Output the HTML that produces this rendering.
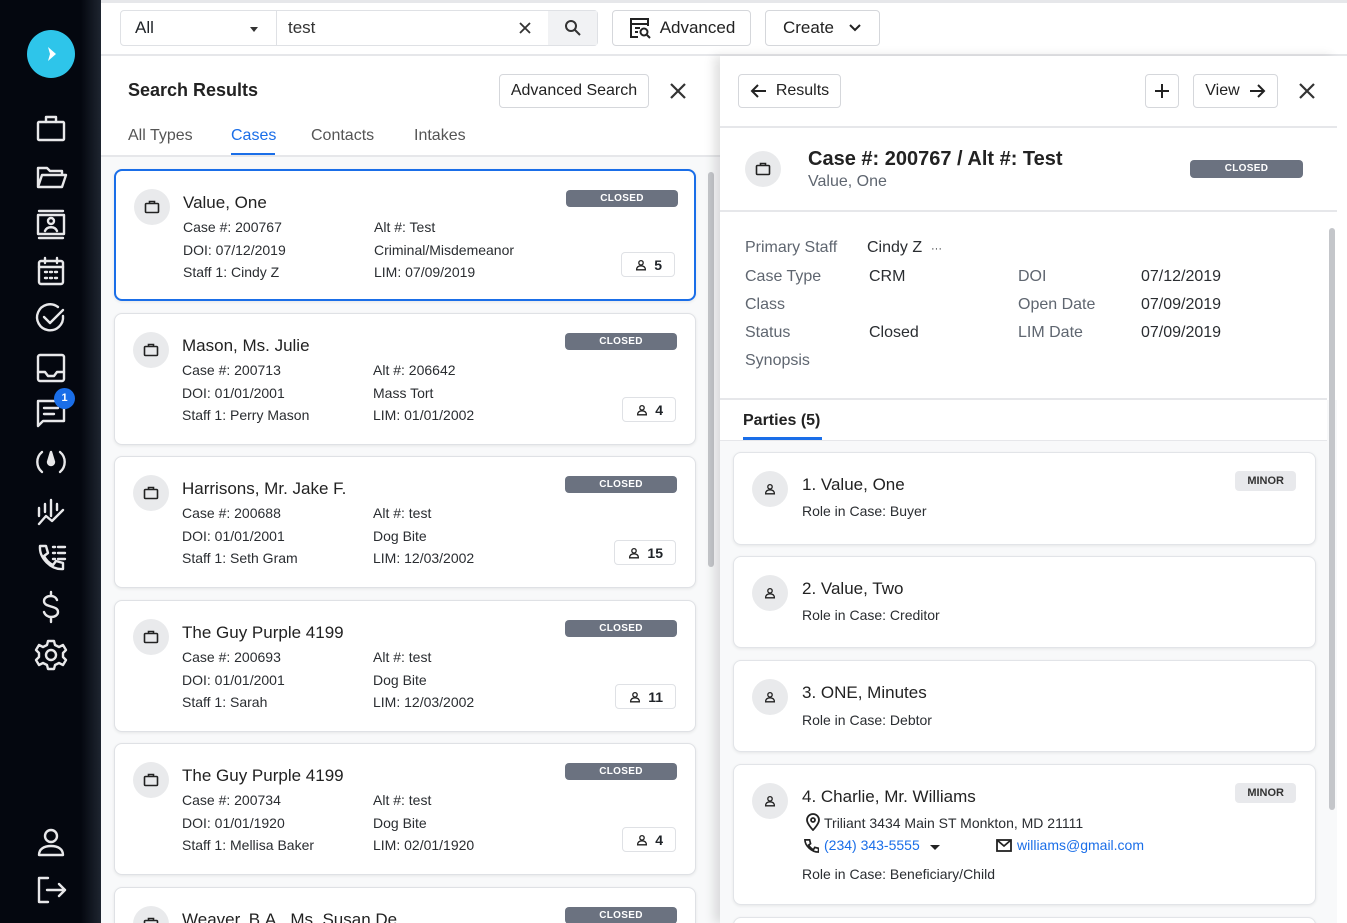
<!DOCTYPE html>
<html><head><meta charset="utf-8"><style>
*{box-sizing:border-box;margin:0;padding:0}
html,body{width:1347px;height:923px;overflow:hidden}
body{font-family:"Liberation Sans",sans-serif;color:#1f2328;background:#fff;position:relative}
.abs{position:absolute}
#side{left:0;top:0;width:101px;height:923px;background:linear-gradient(90deg,#04070f 0,#04070f 80%,#1e2530 100%)}
#side svg{position:absolute;left:33px;width:36px;height:36px;stroke:#e8e8ea;fill:none;stroke-width:2.4;stroke-linecap:round;stroke-linejoin:round}
.btn{position:absolute;border:1px solid #d5d7db;border-radius:4px;background:#fff;font-size:17px;color:#222;display:flex;align-items:center;justify-content:center;gap:8px}
.card{position:absolute;left:114px;width:582px;height:132px;border:1px solid #dfe1e5;border-radius:8px;background:#fff;box-shadow:0 1px 3px rgba(0,0,0,.08)}
.ic{position:absolute;left:18px;top:18px;width:36px;height:36px;border-radius:50%;background:#e9eaec;display:flex;align-items:center;justify-content:center}
.card .nm{position:absolute;left:67px;top:22px;font-size:17px;color:#222}
.card .l{position:absolute;left:67px;top:45px;font-size:14px;line-height:22.5px;color:#2a2d31}
.card .r{position:absolute;left:258px;top:45px;font-size:14px;line-height:22.5px;color:#2a2d31}
.badge{position:absolute;background:#6b7280;color:#fff;font-size:10px;font-weight:bold;border-radius:4px;text-align:center;letter-spacing:.3px}
.card .badge{left:450px;top:19px;width:112px;height:17px;line-height:17px}
.cnt{position:absolute;right:19px;bottom:22px;height:25px;border:1px solid #dfe1e5;border-radius:4px;font-size:14px;font-weight:bold;display:flex;align-items:center;gap:6px;padding:0 12px}
.pc{position:absolute;left:733px;width:583px;border:1px solid #e2e4e8;border-radius:8px;background:#fff;box-shadow:0 1px 3px rgba(0,0,0,.08)}
.pc .ic{left:18px;top:18px}
.pc .nm{position:absolute;left:68px;top:22px;font-size:17px;color:#222}
.pc .rl{position:absolute;left:68px;font-size:14px;color:#2a2d31}
.minor{position:absolute;right:19px;top:18px;background:#e8e9ec;border-radius:4px;font-size:11px;font-weight:bold;color:#333;padding:4px 12px}
.lab{position:absolute;font-size:16px;color:#5f6670}
.val{position:absolute;font-size:16px;color:#2a2d31}
</style></head><body>
<svg width="0" height="0" style="position:absolute"><defs>
<symbol id="bc" viewBox="0 0 18 18"><g fill="none" stroke="#222" stroke-width="1.6"><rect x="2.5" y="5.5" width="13" height="9" rx="1"/><path d="M6.5 5.5V3.5h5v2"/></g></symbol>
<symbol id="pp" viewBox="0 0 16 16"><g fill="none" stroke="#222" stroke-width="1.5"><circle cx="8" cy="5.5" r="2.5"/><path d="M3 13.5c0-3 2-4.5 5-4.5s5 1.5 5 4.5z"/></g></symbol>
</defs></svg>
<div class="abs" style="left:0;top:0;width:1347px;height:3px;background:#e6e7ea"></div>
<div id="side" class="abs">
 <div class="abs" style="left:27px;top:30px;width:48px;height:48px;border-radius:50%;background:#2ec5ea"></div>
 <svg viewBox="0 0 36 36" style="top:36px;left:33px;stroke:none;fill:#fff"><path d="M15 11 L23 18 L15 25 L17 18 Z"/></svg>
 <svg viewBox="0 0 36 36" style="top:111px"><rect x="5" y="11" width="26" height="18" rx="1"/><path d="M13 11V6h10v5"/></svg>
 <svg viewBox="0 0 36 36" style="top:159px"><path d="M5 28V9h9l3 3h12v4M5 28l4-12h24l-4 12z"/></svg>
 <svg viewBox="0 0 36 36" style="top:206px"><path d="M6 5h24M6 32h24"/><rect x="5" y="9" width="26" height="19"/><circle cx="18" cy="15" r="3"/><path d="M12 25c2-5 10-5 12 0"/></svg>
 <svg viewBox="0 0 36 36" style="top:253px"><rect x="6" y="8" width="24" height="23" rx="2"/><path d="M6 14h24M12 5v5M24 5v5M12 19h2M17 19h2M22 19h2M12 25h2M17 25h2M22 25h2"/></svg>
 <svg viewBox="0 0 36 36" style="top:300px"><path d="M30 16a13 13 0 1 1-5-9"/><path d="M11 17l6 6 13-13"/></svg>
 <svg viewBox="0 0 36 36" style="top:350px"><rect x="5" y="5" width="26" height="26" rx="2"/><path d="M5 22h7l3 4h6l3-4h7"/></svg>
 <svg viewBox="0 0 36 36" style="top:395px"><path d="M5 6h26v20H10l-5 5z"/><path d="M11 13h14M11 19h10"/></svg>
 <div class="abs" style="left:54px;top:388px;width:21px;height:21px;border-radius:50%;background:#1a6ee8;color:#fff;font-size:11px;font-weight:bold;text-align:center;line-height:21px">1</div>
 <svg viewBox="0 0 36 36" style="top:444px"><path d="M9 8a13 13 0 0 0 0 20M27 8a13 13 0 0 1 0 20"/><path d="M18 8l-3 10a3 3 0 0 0 6 0z" fill="#e8e8ea"/></svg>
 <svg viewBox="0 0 36 36" style="top:494px"><path d="M6 30l7-8 6 5 11-11M6 22V14M12 18V10M18 22V6M24 16V10"/></svg>
 <svg viewBox="0 0 36 36" style="top:540px"><path d="M7 6h6l2 7-4 3c2 4 5 7 9 9l3-4 7 2v6c-12 1-24-11-23-23z"/><path d="M20 7h2M25 7h7M20 13h2M25 13h7M20 19h2M25 19h7"/></svg>
 <svg viewBox="0 0 36 36" style="top:589px"><path d="M24 11c-1-3-4-4-6-4-4 0-7 2-7 5 0 7 14 4 14 11 0 3-3 5-7 5-3 0-6-2-7-5M18 3v4M18 28v5"/></svg>
 <svg viewBox="0 0 36 36" style="top:637px"><circle cx="18" cy="18" r="5"/><path d="M15 4h6l1 4 4 2 4-2 3 5-3 3v4l3 3-3 5-4-2-4 2-1 4h-6l-1-4-4-2-4 2-3-5 3-3v-4l-3-3 3-5 4 2 4-2z"/></svg>
 <svg viewBox="0 0 36 36" style="top:824px"><circle cx="18" cy="12" r="6"/><path d="M6 31c0-6 5-9 12-9s12 3 12 9z"/></svg>
 <svg viewBox="0 0 36 36" style="top:872px"><path d="M15 6H6v24h9M14 18h18M26 12l6 6-6 6"/></svg>
</div>
<!-- top bar -->
<div class="abs" style="left:101px;top:54px;width:1246px;height:2px;background:#e6e7ea"></div>
<div class="abs" style="left:120px;top:10px;width:478px;height:36px;border:1px solid #dfe1e5;border-radius:4px"></div>
<div class="abs" style="left:135px;top:18px;font-size:17px">All</div>
<div class="abs" style="left:250px;top:27px;border:4px solid transparent;border-top:5px solid #333"></div>
<div class="abs" style="left:276px;top:11px;width:1px;height:34px;background:#dfe1e5"></div>
<div class="abs" style="left:288px;top:18px;font-size:17px;color:#333">test</div>
<svg class="abs" style="left:519px;top:22px" width="12" height="12" viewBox="0 0 12 12" stroke="#333" stroke-width="1.8"><path d="M1 1l10 10M11 1L1 11"/></svg>
<div class="abs" style="left:548px;top:11px;width:49px;height:34px;background:#f1f2f4"></div>
<svg class="abs" style="left:563px;top:18px" width="20" height="20" viewBox="0 0 20 20" fill="none" stroke="#333" stroke-width="2"><circle cx="8" cy="8" r="5"/><path d="M12 12l5 5"/></svg>
<div class="btn" style="left:612px;top:10px;width:139px;height:36px"><svg width="24" height="24" viewBox="0 0 24 24" fill="none" stroke="#222" stroke-width="2"><path d="M10 21H3V3h17v7M3 8h17M7 12h5M7 16h3"/><circle cx="16" cy="16" r="3.5"/><path d="M19 19l3 3"/></svg>Advanced</div>
<div class="btn" style="left:765px;top:10px;width:115px;height:36px;gap:14px">Create<svg width="14" height="10" viewBox="0 0 14 10" fill="none" stroke="#222" stroke-width="2"><path d="M2 2l5 5 5-5"/></svg></div>
<!-- left panel -->
<div class="abs" style="left:101px;top:56px;width:619px;height:867px;background:#f8f9fa"></div>
<div class="abs" style="left:101px;top:56px;width:619px;height:100px;background:#fff"></div>
<div class="abs" style="left:128px;top:80px;font-size:18px;font-weight:bold;color:#222">Search Results</div>
<div class="btn" style="left:499px;top:74px;width:150px;height:34px;font-size:16px">Advanced Search</div>
<svg class="abs" style="left:669px;top:82px" width="18" height="18" viewBox="0 0 18 18" stroke="#333" stroke-width="2.2"><path d="M2 2l14 14M16 2L2 16"/></svg>
<div class="abs" style="left:128px;top:127px;font-size:16px;color:#555">All Types</div>
<div class="abs" style="left:231px;top:127px;font-size:16px;color:#1a6ee8">Cases</div>
<div class="abs" style="left:231px;top:153px;width:44px;height:3px;background:#1a6ee8"></div>
<div class="abs" style="left:311px;top:127px;font-size:16px;color:#555">Contacts</div>
<div class="abs" style="left:414px;top:127px;font-size:16px;color:#555">Intakes</div>
<div class="abs" style="left:101px;top:155px;width:619px;height:2px;background:#e6e7ea"></div>
<div class="abs" style="left:708px;top:172px;width:6px;height:395px;border-radius:3px;background:#c4c6ca"></div>

<div class="card" style="top:169px;border:2px solid #1a6ee8"><div class="ic"><svg width="18" height="18"><use href="#bc"/></svg></div><div class="nm">Value, One</div><div class="l">Case #: 200767<br>DOI: 07/12/2019<br>Staff 1: Cindy Z</div><div class="r">Alt #: Test<br>Criminal/Misdemeanor<br>LIM: 07/09/2019</div><div class="badge">CLOSED</div><div class="cnt"><svg width="14" height="14"><use href="#pp"/></svg>5</div></div>
<div class="card" style="top:313px"><div class="ic"><svg width="18" height="18"><use href="#bc"/></svg></div><div class="nm">Mason, Ms. Julie</div><div class="l">Case #: 200713<br>DOI: 01/01/2001<br>Staff 1: Perry Mason</div><div class="r">Alt #: 206642<br>Mass Tort<br>LIM: 01/01/2002</div><div class="badge">CLOSED</div><div class="cnt"><svg width="14" height="14"><use href="#pp"/></svg>4</div></div>
<div class="card" style="top:456px"><div class="ic"><svg width="18" height="18"><use href="#bc"/></svg></div><div class="nm">Harrisons, Mr. Jake F.</div><div class="l">Case #: 200688<br>DOI: 01/01/2001<br>Staff 1: Seth Gram</div><div class="r">Alt #: test<br>Dog Bite<br>LIM: 12/03/2002</div><div class="badge">CLOSED</div><div class="cnt"><svg width="14" height="14"><use href="#pp"/></svg>15</div></div>
<div class="card" style="top:600px"><div class="ic"><svg width="18" height="18"><use href="#bc"/></svg></div><div class="nm">The Guy Purple 4199</div><div class="l">Case #: 200693<br>DOI: 01/01/2001<br>Staff 1: Sarah</div><div class="r">Alt #: test<br>Dog Bite<br>LIM: 12/03/2002</div><div class="badge">CLOSED</div><div class="cnt"><svg width="14" height="14"><use href="#pp"/></svg>11</div></div>
<div class="card" style="top:743px"><div class="ic"><svg width="18" height="18"><use href="#bc"/></svg></div><div class="nm">The Guy Purple 4199</div><div class="l">Case #: 200734<br>DOI: 01/01/1920<br>Staff 1: Mellisa Baker</div><div class="r">Alt #: test<br>Dog Bite<br>LIM: 02/01/1920</div><div class="badge">CLOSED</div><div class="cnt"><svg width="14" height="14"><use href="#pp"/></svg>4</div></div>
<div class="card" style="top:887px;height:36px;border-bottom:none;border-radius:8px 8px 0 0"><div class="ic"><svg width="18" height="18"><use href="#bc"/></svg></div><div class="nm">Weaver, B.A., Ms. Susan De</div><div class="badge">CLOSED</div></div>

<!-- right panel -->
<div class="abs" style="left:720px;top:56px;width:617px;height:867px;background:#f8f9fa;box-shadow:-6px 0 10px rgba(0,0,0,.12)"></div>
<div class="abs" style="left:720px;top:56px;width:617px;height:344px;background:#fff"></div>
<div class="abs" style="left:1337px;top:56px;width:10px;height:867px;background:#fff"></div>
<div class="btn" style="left:738px;top:74px;width:103px;height:34px;font-size:16px"><svg width="18" height="16" viewBox="0 0 18 16" fill="none" stroke="#222" stroke-width="2"><path d="M16 8H2M8 2L2 8l6 6"/></svg>Results</div>
<div class="btn" style="left:1145px;top:74px;width:34px;height:34px"><svg width="16" height="16" viewBox="0 0 16 16" stroke="#222" stroke-width="2"><path d="M8 1v14M1 8h14"/></svg></div>
<div class="btn" style="left:1193px;top:74px;width:85px;height:34px;font-size:16px">View<svg width="18" height="16" viewBox="0 0 18 16" fill="none" stroke="#222" stroke-width="2"><path d="M2 8h14M10 2l6 6-6 6"/></svg></div>
<svg class="abs" style="left:1298px;top:82px" width="18" height="18" viewBox="0 0 18 18" stroke="#333" stroke-width="2.2"><path d="M2 2l14 14M16 2L2 16"/></svg>
<div class="abs" style="left:720px;top:126px;width:617px;height:2px;background:#e6e7ea"></div>
<div class="ic" style="left:745px;top:151px"><svg width="18" height="18"><use href="#bc"/></svg></div>
<div class="abs" style="left:808px;top:148px;font-size:20px;font-weight:bold;color:#222">Case #: 200767 / Alt #: Test</div>
<div class="abs" style="left:808px;top:173px;font-size:16px;color:#5f6670">Value, One</div>
<div class="badge" style="left:1190px;top:160px;width:113px;height:18px;line-height:18px">CLOSED</div>
<div class="abs" style="left:720px;top:210px;width:617px;height:2px;background:#e6e7ea"></div>
<div class="lab" style="left:745px;top:239px">Primary Staff</div><div class="val" style="left:867px;top:239px">Cindy Z &nbsp;<span style="font-size:11px">···</span></div>
<div class="lab" style="left:745px;top:268px">Case Type</div><div class="val" style="left:869px;top:268px">CRM</div>
<div class="lab" style="left:745px;top:296px">Class</div>
<div class="lab" style="left:745px;top:324px">Status</div><div class="val" style="left:869px;top:324px">Closed</div>
<div class="lab" style="left:745px;top:352px">Synopsis</div>
<div class="lab" style="left:1018px;top:268px">DOI</div><div class="val" style="left:1141px;top:268px">07/12/2019</div>
<div class="lab" style="left:1018px;top:296px">Open Date</div><div class="val" style="left:1141px;top:296px">07/09/2019</div>
<div class="lab" style="left:1018px;top:324px">LIM Date</div><div class="val" style="left:1141px;top:324px">07/09/2019</div>
<div class="abs" style="left:720px;top:398px;width:607px;height:2px;background:#e6e7ea"></div>
<div class="abs" style="left:720px;top:400px;width:607px;height:40px;background:#fff"></div>
<div class="abs" style="left:743px;top:412px;font-size:16px;font-weight:bold;color:#222">Parties (5)</div>
<div class="abs" style="left:743px;top:437px;width:79px;height:3px;background:#1a6ee8"></div>
<div class="abs" style="left:720px;top:440px;width:607px;height:1px;background:#e6e7ea"></div>
<div class="abs" style="left:1329px;top:228px;width:6px;height:582px;border-radius:3px;background:#c4c6ca"></div>

<div class="pc" style="top:452px;height:93px"><div class="ic"><svg width="14" height="14"><use href="#pp"/></svg></div><div class="nm">1. Value, One</div><div class="rl" style="top:50px">Role in Case: Buyer</div><div class="minor">MINOR</div></div>
<div class="pc" style="top:556px;height:92px"><div class="ic"><svg width="14" height="14"><use href="#pp"/></svg></div><div class="nm">2. Value, Two</div><div class="rl" style="top:50px">Role in Case: Creditor</div></div>
<div class="pc" style="top:660px;height:92px"><div class="ic"><svg width="14" height="14"><use href="#pp"/></svg></div><div class="nm">3. ONE, Minutes</div><div class="rl" style="top:51px">Role in Case: Debtor</div></div>
<div class="pc" style="top:764px;height:141px"><div class="ic"><svg width="14" height="14"><use href="#pp"/></svg></div><div class="nm">4. Charlie, Mr. Williams</div>
 <svg class="abs" style="left:72px;top:48px" width="14" height="18" viewBox="0 0 14 18" fill="none" stroke="#222" stroke-width="1.8"><path d="M7 17s6-6 6-10A6 6 0 0 0 1 7c0 4 6 10 6 10z"/><circle cx="7" cy="7" r="2"/></svg>
 <div class="rl" style="left:90px;top:50px">Triliant 3434 Main ST Monkton, MD 21111</div>
 <svg class="abs" style="left:70px;top:73px" width="15" height="15" viewBox="0 0 16 16" fill="none" stroke="#222" stroke-width="1.8"><path d="M2 2h4l1 4-2 1.5c1 2 3 4 5 5L11.5 10l4 1v4C8 15 1 8 1 2z"/></svg>
 <div class="rl" style="left:90px;top:72px;color:#1a6ee8">(234) 343-5555</div>
 <div class="abs" style="left:196px;top:80px;border:5px solid transparent;border-top:5px solid #222"></div>
 <svg class="abs" style="left:262px;top:74px" width="16" height="13" viewBox="0 0 16 13" fill="none" stroke="#222" stroke-width="1.8"><rect x="1" y="1" width="14" height="11"/><path d="M1 1l7 6 7-6"/></svg>
 <div class="rl" style="left:283px;top:72px;color:#1a6ee8">williams@gmail.com</div>
 <div class="rl" style="top:101px">Role in Case: Beneficiary/Child</div><div class="minor">MINOR</div></div>
<div class="pc" style="top:917px;height:20px"></div>
</body></html>
